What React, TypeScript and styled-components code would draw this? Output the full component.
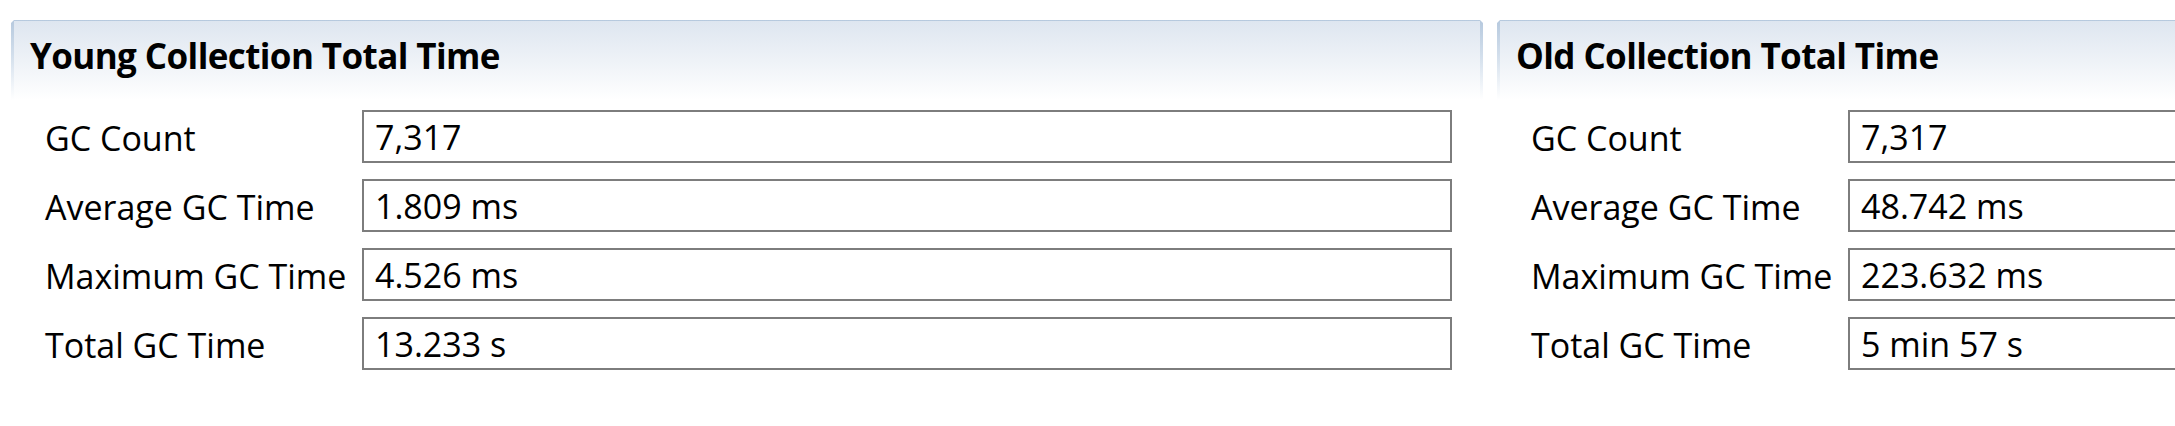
import React from 'react';
import styled, { createGlobalStyle } from 'styled-components';

const GlobalStyle = createGlobalStyle`
  html, body {
    margin: 0;
    padding: 0;
    background: #ffffff;
  }
  body {
    font-family: 'Open Sans', 'Noto Sans', sans-serif;
    color: #000;
  }
`;

const Page = styled.div`
  display: flex;
  gap: 14px;
  padding: 20px 0 0 11px;
  width: 2175px;
  height: 426px;
  box-sizing: border-box;
  overflow: hidden;
`;

const Section = styled.section`
  flex: 0 0 1472px;
  display: flex;
  flex-direction: column;
`;

// fading blue frame round the title bar, with cut corners
const HeaderFrame = styled.div`
  padding: 1px 3px 0 3px;
  background: linear-gradient(to bottom, #b6c9de 0%, #d3dfec 45%, #ffffff 100%);
  clip-path: polygon(3px 0, calc(100% - 3px) 0, 100% 3px, 100% 100%, 0 100%, 0 3px);
`;

const Header = styled.div`
  height: 79px;
  box-sizing: border-box;
  padding: 15px 0 0 16px;
  background: linear-gradient(to bottom, #dee6f0 0%, #eef2f7 50%, #ffffff 100%);
`;

const Title = styled.h2`
  margin: 0;
  font-size: 35px;
  font-weight: 700;
  line-height: 40px;
  letter-spacing: -0.6px;
  white-space: nowrap;
`;

const Body = styled.div`
  display: grid;
  grid-template-columns: 302px 1fr;
  column-gap: 15px;
  row-gap: 16px;
  padding: 10px 31px 0 34px;
`;

const Label = styled.div`
  display: flex;
  align-items: center;
  padding-top: 2px;
  font-size: 34px;
  white-space: nowrap;
`;

const ValueBox = styled.div`
  height: 53px;
  box-sizing: border-box;
  border: 2px solid #7d7d7d;
  display: flex;
  align-items: center;
  padding: 1px 0 0 11px;
  font-size: 34px;
  white-space: nowrap;
`;

type Stat = { label: string; value: string };

const sections: { title: string; stats: Stat[] }[] = [
  {
    title: 'Young Collection Total Time',
    stats: [
      { label: 'GC Count', value: '7,317' },
      { label: 'Average GC Time', value: '1.809 ms' },
      { label: 'Maximum GC Time', value: '4.526 ms' },
      { label: 'Total GC Time', value: '13.233 s' },
    ],
  },
  {
    title: 'Old Collection Total Time',
    stats: [
      { label: 'GC Count', value: '7,317' },
      { label: 'Average GC Time', value: '48.742 ms' },
      { label: 'Maximum GC Time', value: '223.632 ms' },
      { label: 'Total GC Time', value: '5 min 57 s' },
    ],
  },
];

const App: React.FC = () => {
  return (
    <>
      <GlobalStyle />
      <Page>
        {sections.map(section => (
          <Section key={section.title}>
            <HeaderFrame>
              <Header>
                <Title>{section.title}</Title>
              </Header>
            </HeaderFrame>
            <Body>
              {section.stats.map(stat => (
                <React.Fragment key={stat.label}>
                  <Label>{stat.label}</Label>
                  <ValueBox>{stat.value}</ValueBox>
                </React.Fragment>
              ))}
            </Body>
          </Section>
        ))}
      </Page>
    </>
  );
};

export default App;
